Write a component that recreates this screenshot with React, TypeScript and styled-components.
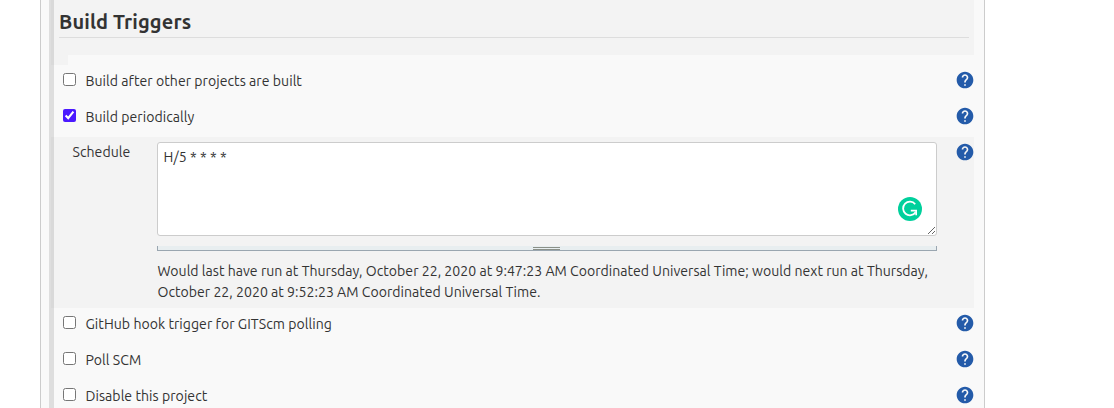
import React from "react";
import styled, { createGlobalStyle } from "styled-components";
import { MdHelp } from "react-icons/md";

const GlobalStyle = createGlobalStyle`
  body {
    margin: 0;
    background: #fff;
    color: #333;
    font-family: Ubuntu, "Noto Sans", sans-serif;
    font-size: 14.08px;
    overflow: hidden;
  }
  * { box-sizing: border-box; }
`;

const Panel = styled.main`
  width: 945px;
  height: 408px;
  margin-left: 40px;
  padding: 0 10px 0 8px;
  overflow: hidden;
  background: #f9f9f9;
  border: solid #ccc;
  border-width: 0 1px;
`;

const Form = styled.form`
  height: 100%;
  border-left: 5px solid #dedede;
`;

const SectionHeader = styled.header`
  height: 55px;
  padding: 0 5px;
  background: #f3f3f3;
  box-shadow: -3px 0 0 #d9d9d9;
`;

const Title = styled.h2`
  margin: 0;
  height: 38px;
  padding-top: 8px;
  border-bottom: 1px solid #ddd;
  font-size: 20px;
  line-height: 27px;
  font-weight: 700;
  letter-spacing: 0.12px;
  white-space: nowrap;
`;

const Notch = styled.div`
  width: 14px;
  height: 10px;
  background: #f3f3f3;
  box-shadow: -3px 0 0 #d9d9d9;
`;

const OptionRow = styled.div`
  display: flex;
  align-items: flex-start;
  height: 36px;
  padding: 5px 0 0 9px;
`;

const Check = styled.input`
  width: 13px;
  height: 13px;
  margin: 3px 9.5px 0 0;
  accent-color: #4b19ff;
`;

const OptionLabel = styled.label`
  flex: 1;
  line-height: 22px;
  letter-spacing: 0.04px;
  white-space: nowrap;
`;

const HelpIcon = styled(MdHelp)`
  flex: none;
  width: 20px;
  height: 20px;
  margin-right: -1px;
  color: #245ba9;
`;

const ScheduleRow = styled.section`
  display: flex;
  align-items: flex-start;
  height: 171px;
  padding-top: 5px;
  background: #f3f3f3;
  box-shadow: -3px 0 0 #d9d9d9;
`;

const FieldName = styled.div`
  width: 103px;
  padding-left: 18.5px;
  line-height: 20px;
  letter-spacing: 0.04px;
`;

const Field = styled.div`
  width: 780px;
  margin-right: 18px;
`;

const EditorFrame = styled.div`
  position: relative;
  height: 94px;
`;

const Editor = styled.textarea`
  display: block;
  width: 100%;
  height: 94px;
  padding: 5px 5.6px;
  border: 1px solid #ccc;
  border-radius: 3px;
  background: #fff;
  color: #333;
  font: inherit;
  line-height: 19px;
  letter-spacing: 0.04px;
  outline: none;
`;

const Assistant = styled.svg`
  position: absolute;
  right: 15px;
  bottom: 15px;
  width: 24px;
  height: 24px;
`;

const ResizeBar = styled.div`
  display: flex;
  height: 5px;
  margin-top: 10px;
  padding: 1px 0 0 375px;
  background: #e8eef0;
  border: solid #9aa6b0;
  border-width: 0 1px 1px;
`;

const Grip = styled.div`
  width: 27px;
  height: 3px;
  border: solid #8b9088;
  border-width: 1px 0;
`;

const Message = styled.p`
  margin: 10px -10px 0 0;
  padding-left: 0.5px;
  line-height: 21px;
  letter-spacing: 0.015px;
  white-space: nowrap;
`;

type OptionProps = { text: string; checked?: boolean };

function Option({ text, checked = false }: OptionProps) {
  const id = text.toLowerCase().replace(/ /g, "-");
  return (
    <OptionRow>
      <Check id={id} type="checkbox" defaultChecked={checked} />
      <OptionLabel htmlFor={id}>{text}</OptionLabel>
      <HelpIcon />
    </OptionRow>
  );
}

export default function App() {
  return (
    <>
      <GlobalStyle />
      <Panel>
        <Form>
          <SectionHeader>
            <Title>Build Triggers</Title>
          </SectionHeader>
          <Notch />
          <Option text="Build after other projects are built" />
          <Option text="Build periodically" checked />
          <ScheduleRow>
            <FieldName>Schedule</FieldName>
            <Field>
              <EditorFrame>
                <Editor defaultValue="H/5 * * * *" spellCheck={false} />
                <Assistant viewBox="0 0 24 24">
                  <circle cx="12" cy="12" r="12" fill="#00d09c" />
                  <path
                    d="M17.2 7.2A6.8 6.8 0 1 0 17.6 15.2"
                    fill="none"
                    stroke="#fff"
                    strokeWidth="1.8"
                  />
                  <path d="M12.8 12.7H19V18.2H17.3V14.4H12.8Z" fill="#fff" />
                </Assistant>
              </EditorFrame>
              <ResizeBar>
                <Grip />
              </ResizeBar>
              <Message>
                Would last have run at Thursday, October 22, 2020 at 9:47:23 AM Coordinated Universal Time; would next run at Thursday,
                <br />
                October 22, 2020 at 9:52:23 AM Coordinated Universal Time.
              </Message>
            </Field>
            <HelpIcon />
          </ScheduleRow>
          <Option text="GitHub hook trigger for GITScm polling" />
          <Option text="Poll SCM" />
          <Option text="Disable this project" />
        </Form>
      </Panel>
    </>
  );
}
